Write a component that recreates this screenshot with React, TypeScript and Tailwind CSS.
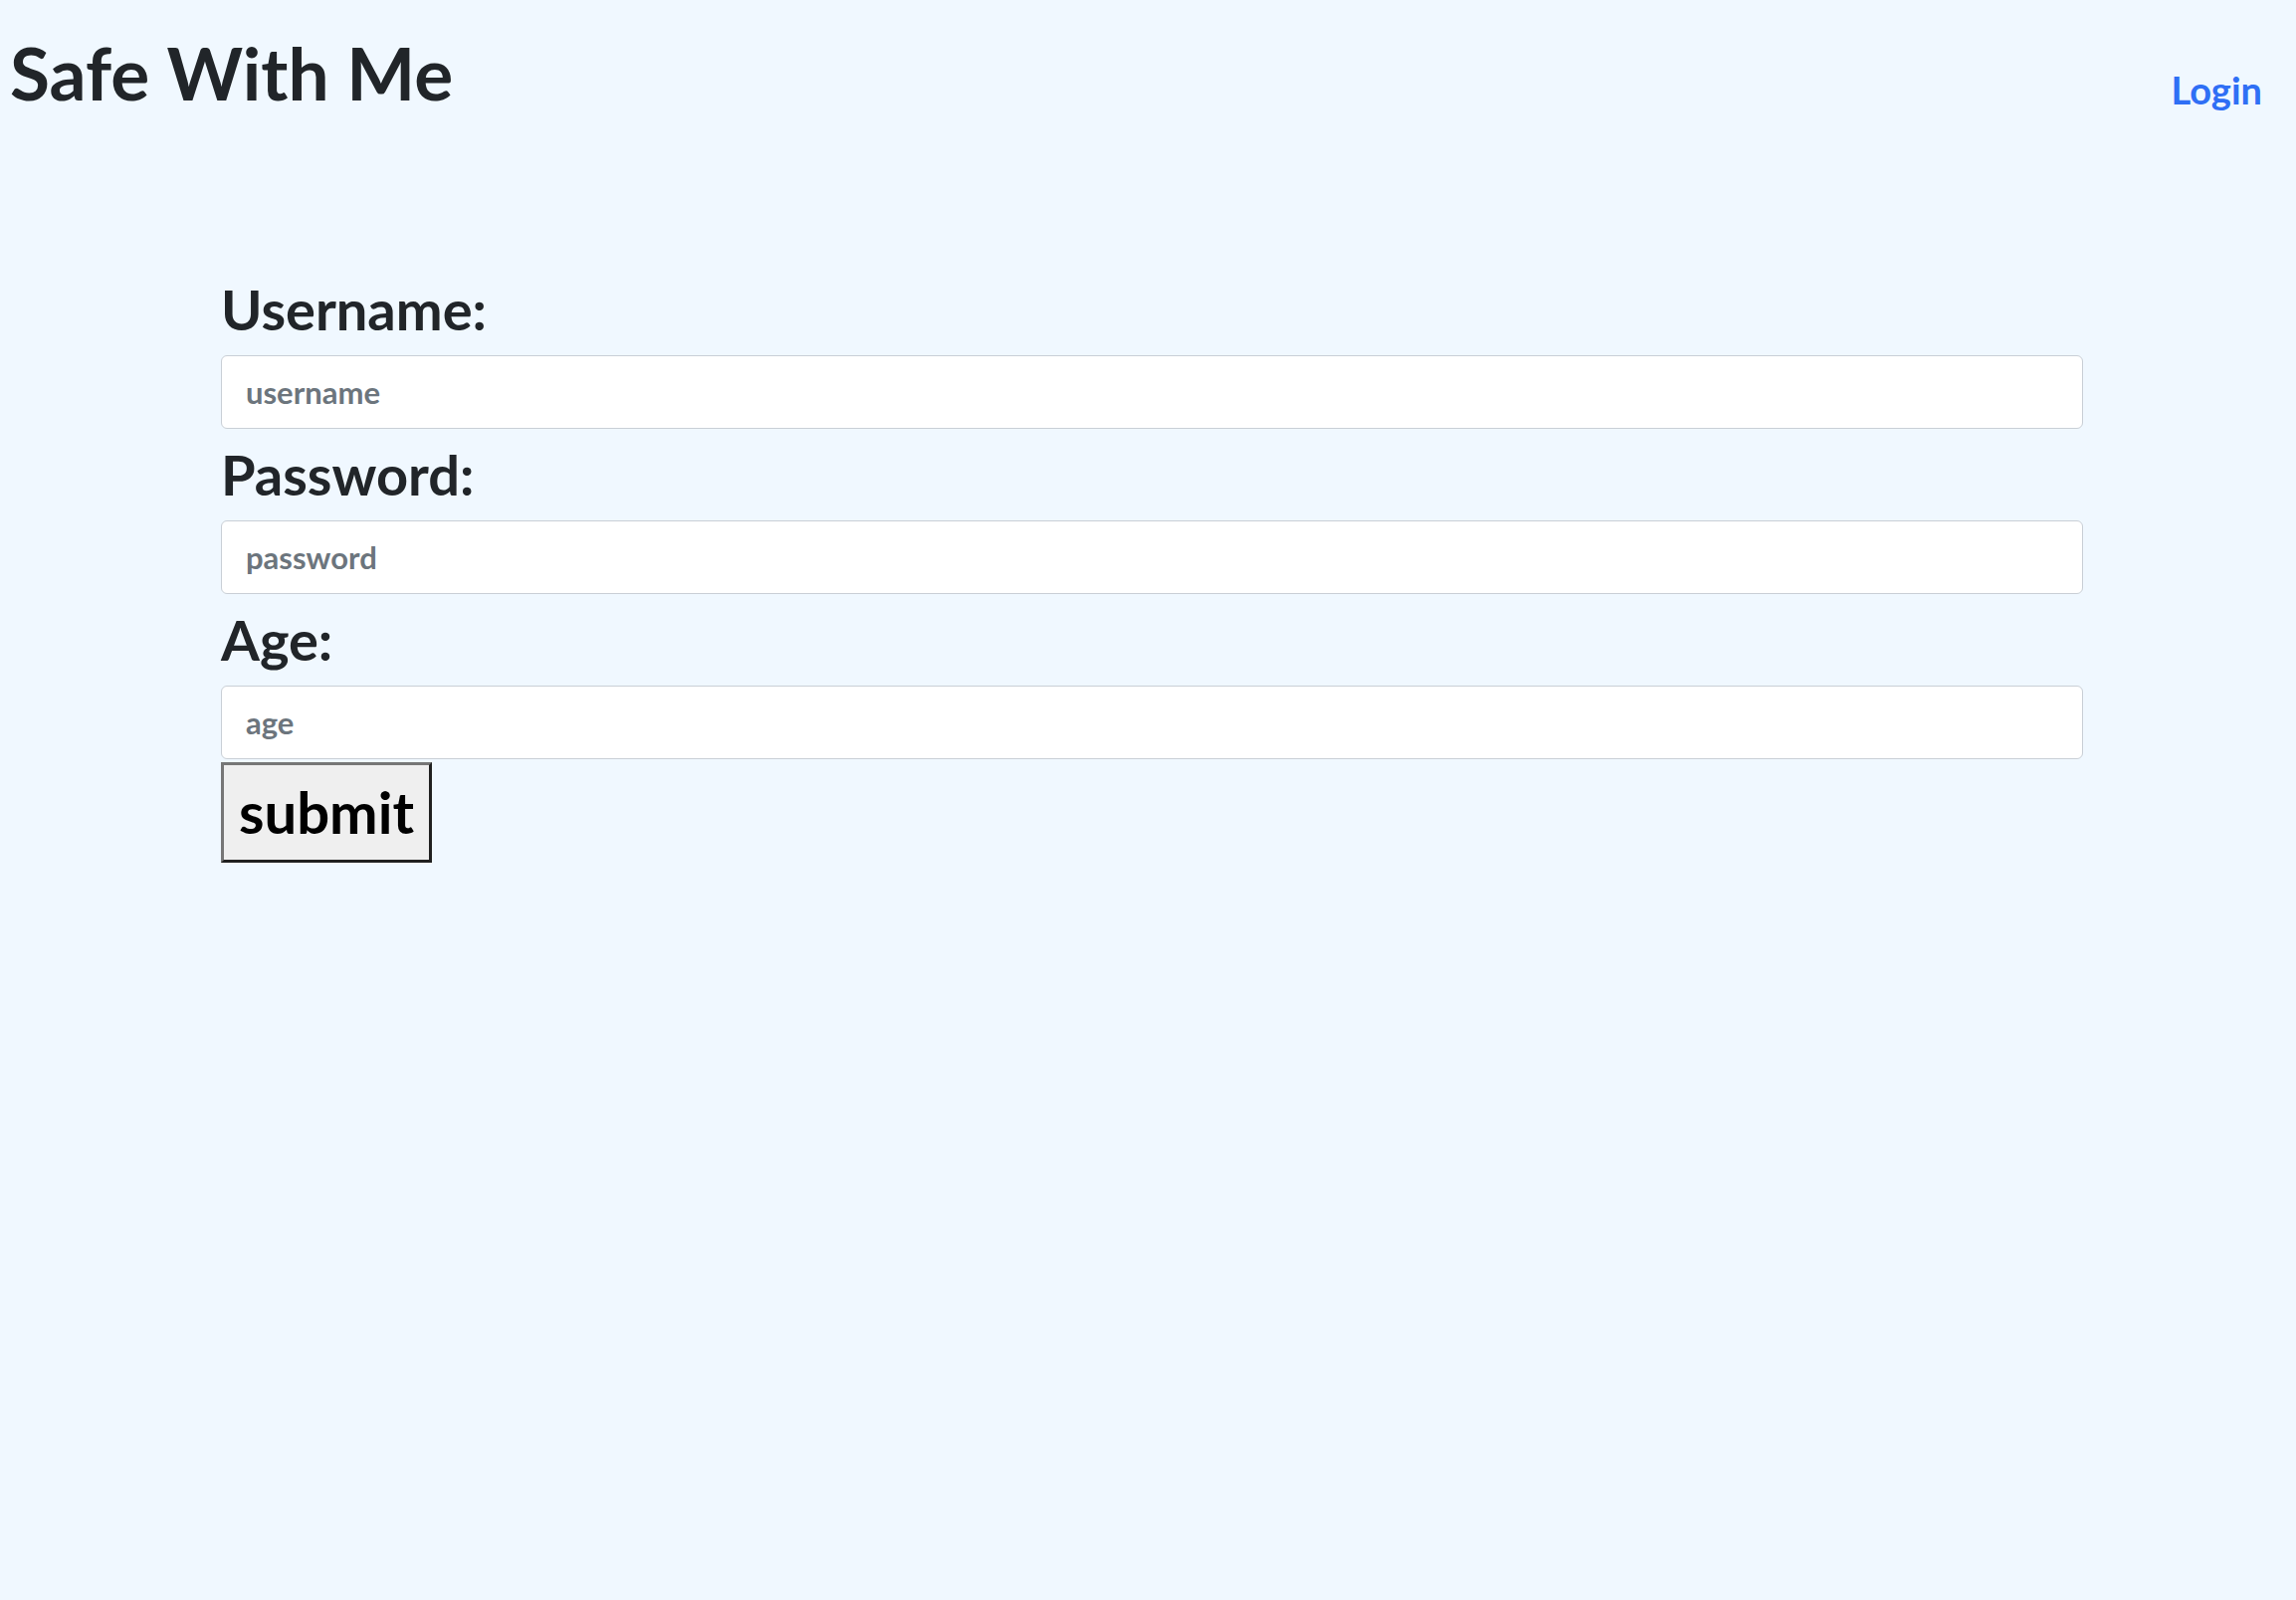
import React from 'react';

const fields = [
  { label: 'Username:', placeholder: 'username', type: 'text' },
  { label: 'Password:', placeholder: 'password', type: 'password' },
  { label: 'Age:', placeholder: 'age', type: 'number' },
];

const App: React.FC = () => {
  return (
    <div className="min-h-[1608px] w-full bg-[#f0f8ff] font-['Lato',_sans-serif] text-[#212529]">
      <header className="flex items-start justify-between pl-[10px] pr-[34px] pt-[30px]">
        <h1 className="text-[73px] leading-[1.2] font-bold">Safe With Me</h1>
        <a href="#" className="mt-[38px] text-[38px] leading-[1.2] font-bold text-[#2f6ff5]">
          Login
        </a>
      </header>

      <form className="mt-[147px] pl-[222px]" onSubmit={(e) => e.preventDefault()}>
        <div className="w-[1871px]">
          {fields.map((f) => (
            <div key={f.label}>
              <label className="block h-[92px] text-[56px] leading-[92px] font-bold">{f.label}</label>
              <input
                type={f.type}
                placeholder={f.placeholder}
                className="block h-[74px] w-full rounded-[6px] border border-[#c9cfd6] bg-white px-[24px] text-[31px] font-bold text-[#212529] placeholder:text-[#6c757d] outline-none"
              />
            </div>
          ))}
        </div>
        <button
          type="submit"
          className="mt-[3px] h-[101px] w-[212px] border-[3px] border-[#767676] border-b-[#202020] border-r-[#202020] bg-[#efefef] text-[58px] font-bold leading-none text-black"
        >
          submit
        </button>
      </form>
    </div>
  );
};

export default App;
